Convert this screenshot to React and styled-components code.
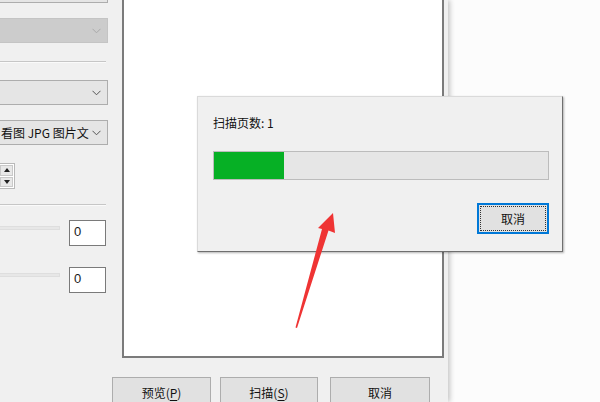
import React from 'react';
import styled, { createGlobalStyle } from 'styled-components';

const GlobalStyle = createGlobalStyle`
    html, body {
        margin: 0;
        padding: 0;
        background: #fcfcfc;
    }
    body {
        font-family: "Noto Sans CJK SC", "Noto Sans", sans-serif;
        font-size: 12px;
        color: #1a1a1a;
    }
`;

const Page = styled.div`
    position: relative;
    width: 600px;
    height: 402px;
    overflow: hidden;
    background: #fcfcfc;
    display: flex;
`;

const Window = styled.div`
    width: 448px;
    height: 402px;
    background: #f0f0f0;
    display: flex;
    flex-direction: column;
    overflow: hidden;
    box-shadow: 2px 0 5px rgba(0, 0, 0, 0.22);
`;

const Main = styled.div`
    display: flex;
    height: 358px;
    flex-shrink: 0;
`;

const LeftPanel = styled.div`
    width: 118px;
    margin-left: -10px;
    margin-top: -22px;
    display: flex;
    flex-direction: column;
`;

const Combo = styled.div`
    height: 25px;
    box-sizing: border-box;
    margin-top: ${({ $mt }) => $mt || 0}px;
    border: 1px solid ${({ $disabled }) => ($disabled ? '#c4c4c4' : '#adadad')};
    background: ${({ $disabled }) => ($disabled ? '#cccccc' : '#e5e5e5')};
    display: flex;
    align-items: center;
    justify-content: space-between;
    padding: 0 6px 0 10px;
    font-size: 12px;
    color: #111;
    white-space: nowrap;
    overflow: hidden;
`;

const Separator = styled.div`
    height: 1px;
    width: 116px;
    margin-top: ${({ $mt }) => $mt}px;
    background: #c6c6c6;
    border-bottom: 1px solid #fafafa;
`;

const Spinner = styled.div`
    width: 25px;
    height: 26px;
    box-sizing: border-box;
    margin-top: 18px;
    border: 1px solid #b9b9b9;
    background: #fff;
    display: flex;
    justify-content: flex-end;
    padding: 1px;
`;

const SpinButtons = styled.div`
    width: 13px;
    display: flex;
    flex-direction: column;
    gap: 1px;
`;

const SpinButton = styled.div`
    flex: 1;
    background: #e8e8e8;
    border: 1px solid #c9c9c9;
    display: flex;
    align-items: center;
    justify-content: center;
`;

const SliderRow = styled.div`
    display: flex;
    align-items: flex-start;
    margin-top: ${({ $mt }) => $mt}px;
    height: 26px;
`;

const Track = styled.div`
    width: 70px;
    height: 4px;
    margin-top: 6px;
    background: #e7e7e7;
    border: 1px solid #dedede;
    box-sizing: border-box;
`;

const ValueBox = styled.div`
    width: 37px;
    height: 26px;
    box-sizing: border-box;
    margin-left: 9px;
    border: 1px solid #7a7a7a;
    background: #fff;
    padding: 3px 0 0 4px;
    font-family: "Liberation Sans", sans-serif;
    font-size: 13px;
`;

const Preview = styled.div`
    width: 322px;
    box-sizing: border-box;
    margin-left: 14px;
    margin-top: -4px;
    background: #fff;
    border: 2px solid #7b7b7b;
    border-top-width: 0;
`;

const ButtonRow = styled.div`
    display: flex;
    margin-top: 19px;
    padding-left: 112px;
`;

const Button = styled.div`
    width: ${({ $w }) => $w}px;
    margin-left: ${({ $ml }) => $ml || 0}px;
    height: 30px;
    box-sizing: border-box;
    background: #e1e1e1;
    border: 1px solid #adadad;
    display: flex;
    align-items: center;
    justify-content: center;
    font-size: 12px;
    color: #111;
    flex-shrink: 0;
    u {
        text-underline-offset: 2px;
    }
`;

const Dialog = styled.div`
    position: absolute;
    left: 197px;
    top: 96px;
    width: 366px;
    height: 156px;
    box-sizing: border-box;
    background: #f0f0f0;
    border: 1px solid;
    border-color: #dadada #6f6f6f #6f6f6f #dadada;
    box-shadow: 1px 1px 2px rgba(0, 0, 0, 0.3);
    display: flex;
    flex-direction: column;
    padding: 0 13px 0 15px;
`;

const Label = styled.div`
    margin-top: 18px;
    line-height: 16px;
    font-size: 12px;
    color: #111;
`;

const Progress = styled.div`
    margin-top: 20px;
    height: 29px;
    box-sizing: border-box;
    border: 1px solid #bcbcbc;
    background: #e6e6e6;
    display: flex;
`;

const ProgressFill = styled.div`
    background: #06b025;
`;

const FocusButton = styled.div`
    align-self: flex-end;
    margin-top: 23px;
    width: 72px;
    height: 31px;
    box-sizing: border-box;
    border: 2px solid #0078d7;
    background: #e1e1e1;
    padding: 1px;
`;

const FocusInner = styled.div`
    height: 100%;
    box-sizing: border-box;
    border: 1px dotted #333;
    display: flex;
    align-items: center;
    justify-content: center;
    font-size: 12px;
    color: #111;
`;

const ArrowLayer = styled.svg`
    position: absolute;
    left: 0;
    top: 0;
    pointer-events: none;
`;

const Chevron = ({ color }) => (
    <svg width="9" height="6" viewBox="0 0 9 6">
        <path d="M0.5 0.8 L4.5 4.8 L8.5 0.8" fill="none" stroke={color} strokeWidth="1" />
    </svg>
);

const Tri = ({ up }) => (
    <svg width="6" height="4" viewBox="0 0 6 4">
        <path d={up ? 'M0 4 L3 0 L6 4 Z' : 'M0 0 L3 4 L6 0 Z'} fill="#222" />
    </svg>
);

const App = () => {
    const progress = 70 / 334;
    return (
        <>
            <GlobalStyle />
            <Page>
                <Window>
                    <Main>
                        <LeftPanel>
                            <Combo><span /><Chevron color="#666" /></Combo>
                            <Combo $mt={15} $disabled><span /><Chevron color="#a9a9a9" /></Combo>
                            <Separator $mt={18} />
                            <Combo $mt={17}><span /><Chevron color="#555" /></Combo>
                            <Combo $mt={15}><span>看图 JPG 图片文</span><Chevron color="#555" /></Combo>
                            <Spinner>
                                <SpinButtons>
                                    <SpinButton><Tri up /></SpinButton>
                                    <SpinButton><Tri /></SpinButton>
                                </SpinButtons>
                            </Spinner>
                            <Separator $mt={15} />
                            <SliderRow $mt={14}>
                                <Track />
                                <ValueBox>0</ValueBox>
                            </SliderRow>
                            <SliderRow $mt={21}>
                                <Track />
                                <ValueBox>0</ValueBox>
                            </SliderRow>
                        </LeftPanel>
                        <Preview />
                    </Main>
                    <ButtonRow>
                        <Button $w={99}>预览(<u>P</u>)</Button>
                        <Button $w={98} $ml={9}>扫描(<u>S</u>)</Button>
                        <Button $w={100} $ml={12}>取消</Button>
                    </ButtonRow>
                </Window>
                <Dialog>
                    <Label>扫描页数: 1</Label>
                    <Progress>
                        <ProgressFill style={{ width: `${progress * 100}%` }} />
                    </Progress>
                    <FocusButton>
                        <FocusInner>取消</FocusInner>
                    </FocusButton>
                </Dialog>
                <ArrowLayer width="600" height="402" viewBox="0 0 600 402">
                    <polygon
                        points="333,213 335,233 328.5,230.5 297,328 295.5,327.5 322,229 318,228"
                        fill="#ef3434"
                    />
                </ArrowLayer>
            </Page>
        </>
    );
};

export default App;
